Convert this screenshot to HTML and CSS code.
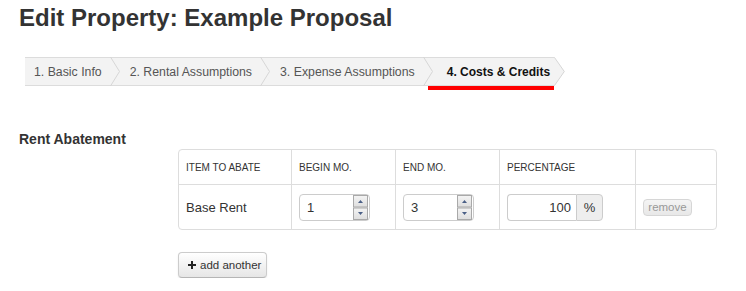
FILE: index.html
```html
<!DOCTYPE html>
<html lang="en">
<head>
<meta charset="utf-8">
<title>Edit Property: Example Proposal</title>
<link rel="stylesheet" href="styles.css">
</head>
<body>
<h1 class="page-title">Edit Property: Example Proposal</h1>

<nav class="steps">
  <span class="step step-first">1. Basic Info</span>
  <svg class="chev" width="10" height="29" viewBox="0 0 10 29"><rect x="0" y="0" width="10" height="29" fill="#f3f3f3"/><line x1="0" y1="0.5" x2="10" y2="0.5" stroke="#dcdcdc"/><line x1="0" y1="28.5" x2="10" y2="28.5" stroke="#dcdcdc"/><polyline points="0.5,0 9.5,14.5 0.5,29" fill="none" stroke="#d6d6d6"/></svg>
  <span class="step">2. Rental Assumptions</span>
  <svg class="chev" width="10" height="29" viewBox="0 0 10 29"><rect x="0" y="0" width="10" height="29" fill="#f3f3f3"/><line x1="0" y1="0.5" x2="10" y2="0.5" stroke="#dcdcdc"/><line x1="0" y1="28.5" x2="10" y2="28.5" stroke="#dcdcdc"/><polyline points="0.5,0 9.5,14.5 0.5,29" fill="none" stroke="#d6d6d6"/></svg>
  <span class="step">3. Expense Assumptions</span>
  <svg class="chev" width="10" height="29" viewBox="0 0 10 29"><rect x="0" y="0" width="10" height="29" fill="#f3f3f3"/><line x1="0" y1="0.5" x2="10" y2="0.5" stroke="#dcdcdc"/><line x1="0" y1="28.5" x2="10" y2="28.5" stroke="#dcdcdc"/><polyline points="0.5,0 9.5,14.5 0.5,29" fill="none" stroke="#d6d6d6"/></svg>
  <span class="step step-active">4. Costs &amp; Credits</span>
  <svg class="chev" width="11" height="29" viewBox="0 0 11 29"><polygon points="0,0 10.5,14.5 0,29" fill="#f3f3f3"/><polyline points="0,0.5 0.5,0.5 10.3,14.5 0.5,28.5 0,28.5" fill="none" stroke="#d6d6d6"/></svg>
</nav>

<section class="form-section">
  <h2 class="section-label">Rent Abatement</h2>
  <div class="section-body">
    <table class="abate-table">
      <thead>
        <tr>
          <th class="c-item">Item to Abate</th>
          <th class="c-begin">Begin Mo.</th>
          <th class="c-end">End Mo.</th>
          <th class="c-pct">Percentage</th>
          <th class="c-act"></th>
        </tr>
      </thead>
      <tbody>
        <tr>
          <td class="c-item">Base Rent</td>
          <td class="c-begin">
            <div class="num-input"><span class="num-value">1</span>
              <svg class="spinner" width="15" height="25" viewBox="0 0 15 25"><defs><linearGradient id="sg1" x1="0" y1="0" x2="0" y2="1"><stop offset="0" stop-color="#f4f4f4"/><stop offset="1" stop-color="#dedede"/></linearGradient></defs><rect x="0.5" y="0.5" width="14" height="11.5" fill="url(#sg1)" stroke="#a9a9a9"/><rect x="0.5" y="13" width="14" height="11.5" fill="url(#sg1)" stroke="#a9a9a9"/><polygon points="5,8 10,8 7.5,5" fill="#4a5f86"/><polygon points="5,17 10,17 7.5,20" fill="#4a5f86"/></svg>
            </div>
          </td>
          <td class="c-end">
            <div class="num-input"><span class="num-value">3</span>
              <svg class="spinner" width="15" height="25" viewBox="0 0 15 25"><defs><linearGradient id="sg2" x1="0" y1="0" x2="0" y2="1"><stop offset="0" stop-color="#f4f4f4"/><stop offset="1" stop-color="#dedede"/></linearGradient></defs><rect x="0.5" y="0.5" width="14" height="11.5" fill="url(#sg2)" stroke="#a9a9a9"/><rect x="0.5" y="13" width="14" height="11.5" fill="url(#sg2)" stroke="#a9a9a9"/><polygon points="5,8 10,8 7.5,5" fill="#4a5f86"/><polygon points="5,17 10,17 7.5,20" fill="#4a5f86"/></svg>
            </div>
          </td>
          <td class="c-pct">
            <div class="pct-group"><span class="pct-input">100</span><span class="pct-addon">%</span></div>
          </td>
          <td class="c-act"><button class="btn-remove" type="button">remove</button></td>
        </tr>
      </tbody>
    </table>
    <button class="btn-add" type="button"><svg class="plus" width="8" height="8" viewBox="0 0 8 8"><rect x="3" y="0" width="2" height="8" fill="#222"/><rect x="0" y="3" width="8" height="2" fill="#222"/></svg>add another</button>
  </div>
</section>
</body>
</html>
```

FILE: styles.css
```css
* {
  box-sizing: border-box;
}

body {
  margin: 0;
  padding: 0 19px;
  background: #fff;
  color: #333;
  font-family: "Liberation Sans", Arial, Helvetica, sans-serif;
}

.page-title {
  margin: 0;
  padding-top: 4px;
  font-size: 24px;
  line-height: 28px;
  font-weight: bold;
  color: #333;
}

.steps {
  position: relative;
  display: inline-flex;
  align-items: stretch;
  margin: 25px 0 0 6px;
  height: 29px;
}

.step {
  display: flex;
  align-items: center;
  padding: 0 8px 0 10px;
  background: #f3f3f3;
  border-top: 1px solid #dcdcdc;
  border-bottom: 1px solid #dcdcdc;
  font-size: 12.3px;
  color: #555;
  white-space: nowrap;
}

.step-first {
  padding-left: 9px;
}

.step-active {
  position: relative;
  font-size: 12px;
  font-weight: bold;
  color: #111;
  padding-left: 14px;
  padding-right: 4px;
}

.step-active::after {
  content: "";
  position: absolute;
  left: -5px;
  right: 0;
  bottom: -5px;
  height: 4px;
  background: #ff0000;
}

.chev {
  display: block;
  flex: none;
}

.form-section {
  display: grid;
  grid-template-columns: 159px auto;
  margin-top: 43px;
}

.section-label {
  margin: 0;
  font-size: 14px;
  line-height: 20px;
  font-weight: bold;
  color: #333;
}

.section-body {
  display: flex;
  flex-direction: column;
  align-items: flex-start;
}

.abate-table {
  margin-top: 20px;
  width: 539px;
  table-layout: fixed;
  border-collapse: separate;
  border-spacing: 0;
  border: 1px solid #dddddd;
  border-radius: 4px;
}

.abate-table th,
.abate-table td {
  padding: 0 7px;
  text-align: left;
  vertical-align: middle;
  border-left: 1px solid #dddddd;
}

.abate-table th:first-child,
.abate-table td:first-child {
  border-left: 0;
}

.abate-table th {
  height: 34px;
  font-size: 10px;
  font-weight: normal;
  text-transform: uppercase;
  color: #333;
}

.abate-table td {
  height: 45px;
  border-top: 1px solid #dddddd;
  font-size: 13px;
  color: #333;
}

.c-item { width: 112px; }
.c-begin { width: 104px; }
.c-end { width: 104px; }
.c-pct { width: 136px; }
.c-act { width: 81px; }

.num-input {
  display: flex;
  align-items: center;
  justify-content: space-between;
  width: 71px;
  height: 27px;
  padding: 0 1px 0 7px;
  border: 1px solid #cccccc;
  border-radius: 4px;
  background: #fff;
  font-size: 13px;
  color: #333;
}

.spinner {
  display: block;
}

.pct-group {
  display: flex;
  height: 27px;
}

.pct-input {
  display: flex;
  align-items: center;
  justify-content: flex-end;
  width: 69px;
  padding-right: 5px;
  border: 1px solid #cccccc;
  border-right: 0;
  border-radius: 4px 0 0 4px;
  background: #fff;
  font-size: 13px;
  color: #333;
}

.pct-addon {
  display: flex;
  align-items: center;
  justify-content: center;
  width: 27px;
  border: 1px solid #cccccc;
  border-radius: 0 4px 4px 0;
  background: #eeeeee;
  font-size: 13px;
  color: #333;
}

.btn-remove {
  display: block;
  width: 49px;
  height: 17px;
  padding: 0;
  margin: 0;
  border: 1px solid #d6d6d6;
  border-radius: 4px;
  background: linear-gradient(#f4f4f4, #e8e8e8);
  font-family: inherit;
  font-size: 11.5px;
  line-height: 15px;
  color: #999;
}

.btn-add {
  display: flex;
  align-items: center;
  gap: 4px;
  margin-top: 22px;
  width: 89px;
  height: 26px;
  padding: 0 0 0 9px;
  border: 1px solid #cccccc;
  border-bottom-color: #b5b5b5;
  border-radius: 4px;
  background: linear-gradient(#ffffff, #e6e6e6);
  box-shadow: 0 1px 2px rgba(0, 0, 0, 0.08);
  font-family: inherit;
  font-size: 11.5px;
  color: #333;
}

.plus {
  display: block;
  flex: none;
}
```
